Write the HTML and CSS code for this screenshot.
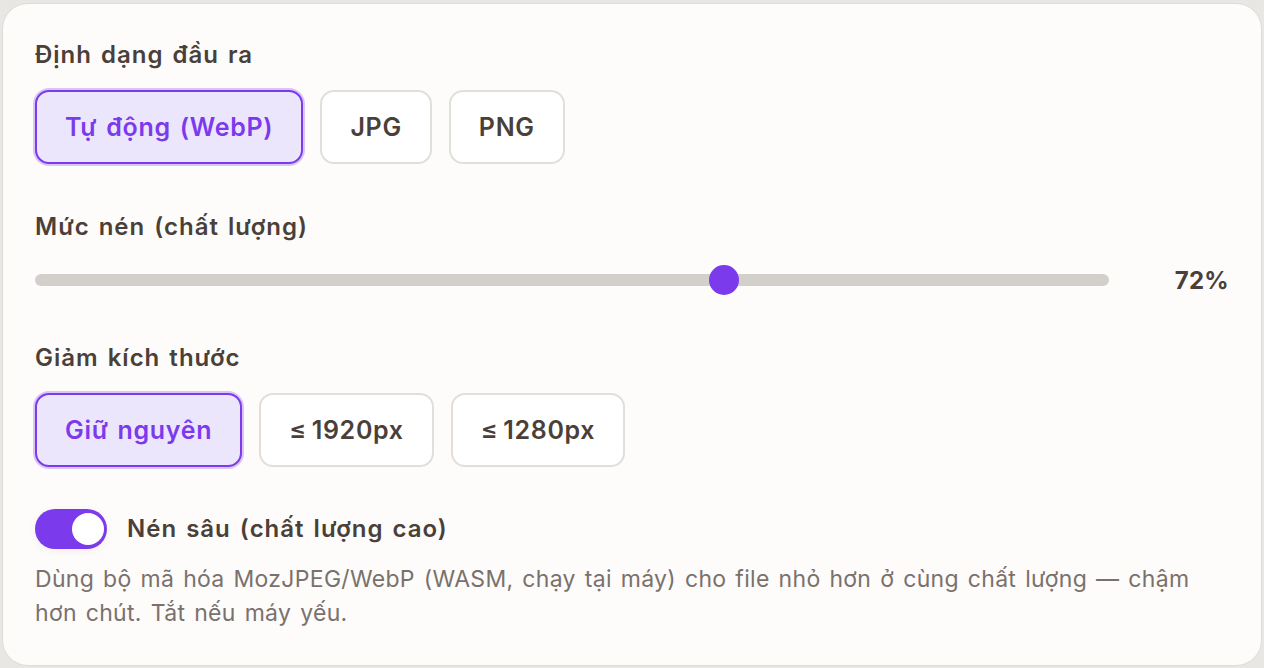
FILE: index.html
```html
<!DOCTYPE html>
<html lang="vi">
<head>
<meta charset="utf-8">
<title>Cài đặt nén ảnh</title>
<link rel="stylesheet" href="styles.css">
</head>
<body>
<div class="card">
  <section class="section">
    <div class="label">Định dạng đầu ra</div>
    <div class="options">
      <button class="opt active">Tự động (WebP)</button>
      <button class="opt">JPG</button>
      <button class="opt">PNG</button>
    </div>
  </section>

  <section class="section">
    <div class="label">Mức nén (chất lượng)</div>
    <div class="slider-row">
      <input class="range" type="range" min="21" max="100" value="72">
      <div class="value">72%</div>
    </div>
  </section>

  <section class="section">
    <div class="label">Giảm kích thước</div>
    <div class="options">
      <button class="opt active">Giữ nguyên</button>
      <button class="opt">≤&#8201;1920px</button>
      <button class="opt">≤&#8201;1280px</button>
    </div>
  </section>

  <div class="toggle-row">
    <span class="toggle on"><span class="knob"></span></span>
    <span class="toggle-label">Nén sâu (chất lượng cao)</span>
  </div>
  <p class="desc">Dùng bộ mã hóa MozJPEG/WebP (WASM, chạy tại máy) cho file nhỏ hơn ở cùng chất lượng — chậm hơn chút. Tắt nếu máy yếu.</p>
</div>
</body>
</html>
```

FILE: styles.css
```css
* { box-sizing: border-box; }

html, body {
  margin: 0;
  padding: 0;
  background: #e9e7e4;
}

body {
  padding: 3px 2px 0 2px;
  font-family: Inter, "Noto Sans", sans-serif;
  color: #4a3f39;
}

.card {
  background: #fdfcfb;
  border: 1px solid #dfdcd8;
  border-radius: 26px;
  padding: 36px 32px 34px 32px;
  height: 663px;
}

.section {
  display: flex;
  flex-direction: column;
  gap: 20px;
  margin-bottom: 48px;
}

.section:nth-of-type(2) { gap: 23px; }
.section:nth-of-type(3) { margin-bottom: 42px; }

.label,
.toggle-label {
  font-size: 24px;
  line-height: 30px;
  font-weight: 600;
  letter-spacing: 1px;
  word-spacing: 2px;
  color: #4a3f39;
}

.options {
  display: flex;
  gap: 17px;
}

.opt {
  font-family: inherit;
  font-size: 25px;
  line-height: 30px;
  font-weight: 600;
  letter-spacing: 0.7px;
  word-spacing: 2px;
  color: #4a3f39;
  background: #ffffff;
  border: 2px solid #e2dfdb;
  border-radius: 14px;
  padding: 20px 28px;
  height: 74px;
  cursor: pointer;
}

.opt.active {
  color: #7c3aed;
  background: #ece6fd;
  border-color: #7c3aed;
  box-shadow: 0 0 0 2px rgba(124, 58, 237, 0.28);
}

.slider-row {
  display: grid;
  grid-template-columns: 1fr 120px;
  align-items: center;
  height: 30px;
}

.range {
  -webkit-appearance: none;
  appearance: none;
  margin: 0;
  width: 100%;
  height: 30px;
  background: transparent;
}

.range::-webkit-slider-runnable-track {
  height: 12px;
  border-radius: 6px;
  background: #d3cfca;
}

.range::-webkit-slider-thumb {
  -webkit-appearance: none;
  appearance: none;
  width: 30px;
  height: 30px;
  border-radius: 50%;
  background: #7c3aed;
  border: none;
  margin-top: -9px;
}

.value {
  text-align: right;
  font-size: 24px;
  font-weight: 700;
  letter-spacing: 0.3px;
  color: #4a3f39;
}

.toggle-row {
  display: flex;
  align-items: center;
  gap: 20px;
}

.toggle {
  position: relative;
  display: inline-block;
  width: 72px;
  height: 40px;
  border-radius: 20px;
  background: #7c3aed;
  box-shadow: 0 2px 8px rgba(0, 0, 0, 0.06);
}

.knob {
  position: absolute;
  top: 4px;
  right: 3px;
  width: 32px;
  height: 32px;
  border-radius: 50%;
  background: #ffffff;
}

.desc {
  margin: 13px 0 0 0;
  font-size: 23px;
  line-height: 34px;
  letter-spacing: 0.3px;
  word-spacing: 2.2px;
  color: #7a716c;
}
```
